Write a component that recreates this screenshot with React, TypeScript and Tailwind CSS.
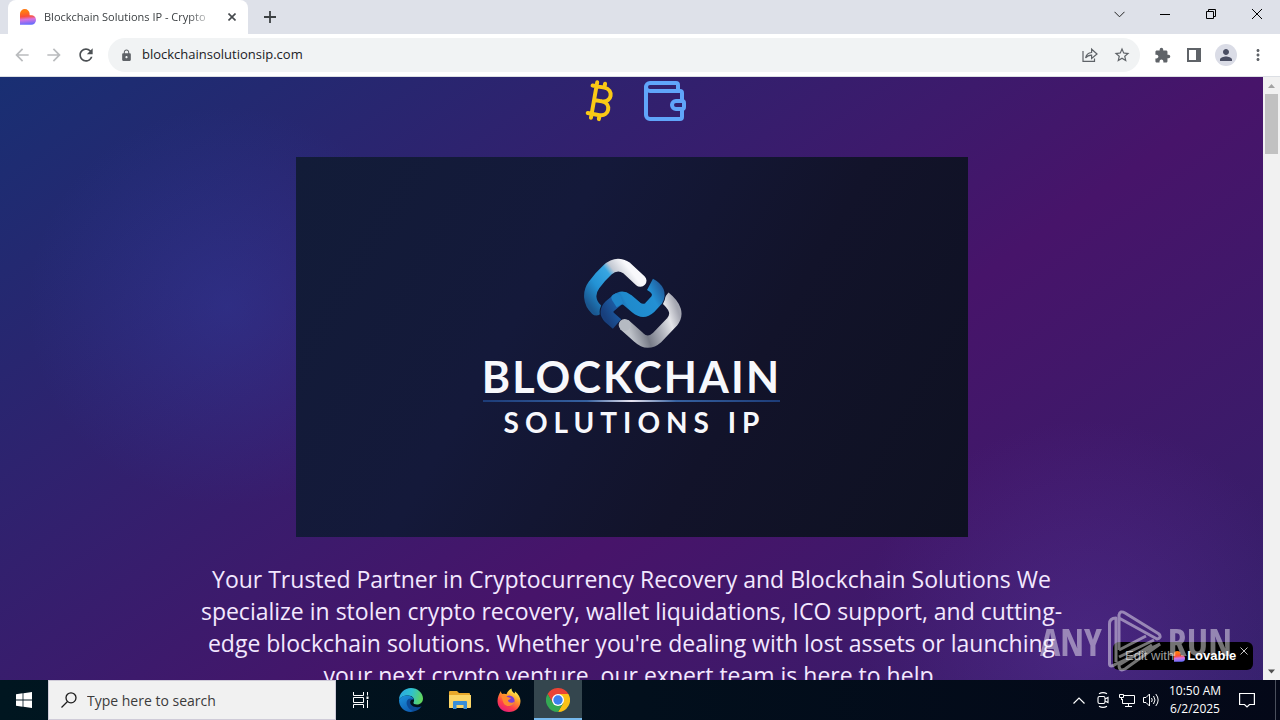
import React from "react";
import { Bitcoin, Wallet } from "lucide-react";
import {
  MdArrowBack,
  MdArrowForward,
  MdExtension,
  MdLock,
  MdMoreVert,
  MdPerson,
  MdRefresh,
  MdStarBorder,
} from "react-icons/md";

interface IconButtonProps {
  label: string;
  className?: string;
  children: React.ReactNode;
}

const IconButton = ({ label, className = "w-8", children }: IconButtonProps) => (
  <button
    type="button"
    aria-label={label}
    className={`flex h-full shrink-0 items-center justify-center ${className}`}
  >
    {children}
  </button>
);

const LovableHeart = ({ id, size }: { id: string; size: number }) => (
  <svg width={size} height={size} viewBox="0 0 16 16" aria-hidden="true">
    <defs>
      <linearGradient id={id} x1="0.45" y1="0" x2="0.55" y2="1">
        <stop offset="0.15" stopColor="#ff7a14" />
        <stop offset="0.45" stopColor="#fb4f38" />
        <stop offset="0.65" stopColor="#d873e0" />
        <stop offset="1" stopColor="#5b6cff" />
      </linearGradient>
    </defs>
    <path
      d="M0 4.8A4.8 4.8 0 0 1 9.6 4.8V6.2H11.2A4.8 4.8 0 0 1 11.2 15.8H0Z"
      fill={`url(#${id})`}
    />
  </svg>
);

const TabStrip = () => (
  <div className="flex h-[34px] shrink-0 bg-[#dee1e9] pl-2">
    <div className="flex h-full w-60 items-center rounded-t-lg bg-white pl-3 pr-1.5">
      <LovableHeart id="tab-heart" size={16} />
      <span className="ml-2 w-[170px] overflow-hidden whitespace-nowrap text-[11px] text-[#3c4043] [mask-image:linear-gradient(to_right,black_85%,transparent)]">
        Blockchain Solutions IP - Crypto
      </span>
      <IconButton label="Close tab" className="ml-auto w-5">
        <svg width="8" height="8" viewBox="0 0 8 8" stroke="#45494d" strokeWidth="1.6">
          <path d="M0.5 0.5L7.5 7.5M7.5 0.5L0.5 7.5" />
        </svg>
      </IconButton>
    </div>
    <IconButton label="New tab" className="ml-1.5 w-8">
      <svg width="12" height="12" viewBox="0 0 12 12" stroke="#3c4043" strokeWidth="1.8">
        <path d="M6 0V12M0 6H12" />
      </svg>
    </IconButton>
    <div className="ml-auto flex pb-1.5">
      <IconButton label="Search tabs" className="w-[46px]">
        <svg width="11" height="7" viewBox="0 0 11 7" fill="none" stroke="#222">
          <path d="M0.5 0.8L5.5 5.8L10.5 0.8" />
        </svg>
      </IconButton>
      <IconButton label="Minimize" className="w-[46px]">
        <svg width="10" height="10" viewBox="0 0 10 10" stroke="#000">
          <path d="M0 5.5H10" />
        </svg>
      </IconButton>
      <IconButton label="Restore" className="w-[46px]">
        <svg width="10" height="10" viewBox="0 0 10 10" fill="none" stroke="#000">
          <path d="M0.5 2.5H7.5V9.5H0.5ZM2.5 2.5V0.5H9.5V7.5H7.5" />
        </svg>
      </IconButton>
      <IconButton label="Close" className="w-[46px]">
        <svg width="10" height="10" viewBox="0 0 10 10" stroke="#000">
          <path d="M0 0L10 10M10 0L0 10" />
        </svg>
      </IconButton>
    </div>
  </div>
);

const Toolbar = () => (
  <div className="flex h-[43px] shrink-0 items-center border-b border-[#dcdfe4] bg-white px-1.5 text-[#5f6368]">
    <IconButton label="Back">
      <MdArrowBack size={20} color="#babcbe" />
    </IconButton>
    <IconButton label="Forward">
      <MdArrowForward size={20} color="#babcbe" />
    </IconButton>
    <IconButton label="Reload">
      <MdRefresh size={20} color="#4c5054" />
    </IconButton>
    <div className="ml-1.5 flex h-[34px] flex-1 items-center rounded-full bg-[#f1f3f4] pl-3 pr-0.5">
      <MdLock size={13} className="shrink-0" />
      <input
        type="text"
        aria-label="Address"
        defaultValue="blockchainsolutionsip.com"
        className="ml-[9px] min-w-0 flex-1 bg-transparent text-[13px] text-[#202124] outline-none"
      />
      <IconButton label="Share">
        <svg width="16" height="16" viewBox="0 0 16 16" fill="none" stroke="#5f6368" strokeWidth="1.2">
          <path d="M1 4V14.4H12.5V11.5" />
          <path d="M3.6 11C4.2 7.6 6.3 5.8 9.6 5.5V2.2L15 7L9.6 11.4V8.2C7 8.2 5.1 9 3.6 11Z" />
        </svg>
      </IconButton>
      <IconButton label="Bookmark this page">
        <MdStarBorder size={18} />
      </IconButton>
    </div>
    <div className="ml-1.5 flex h-full">
      <IconButton label="Extensions">
        <MdExtension size={17} />
      </IconButton>
      <IconButton label="Side panel">
        <svg width="14" height="14" viewBox="0 0 14 14">
          <path d="M1 1H13V13H1Z" fill="none" stroke="#5f6368" strokeWidth="2" />
          <path d="M9 1H13V13H9Z" fill="#5f6368" />
        </svg>
      </IconButton>
      <IconButton label="Profile">
        <span className="flex size-[22px] items-center justify-center rounded-full bg-[#dadce6]">
          <MdPerson size={18} color="#4a4e63" />
        </span>
      </IconButton>
      <IconButton label="Menu">
        <MdMoreVert size={18} />
      </IconButton>
    </div>
  </div>
);

const twistPath =
  "M240 103Q276 122 260 150L240 172Q220 190 199 173L172 150Q156 138 142 150L120 168Q102 186 119 203L141 222";

const ChainEmblem = () => (
  <svg
    viewBox="36 24 300 276"
    className="h-[92px] w-[100px]"
    fill="none"
    aria-hidden="true"
  >
    <defs>
      <linearGradient id="upper" gradientUnits="userSpaceOnUse" x1="70" y1="185" x2="215" y2="75">
        <stop offset="0" stopColor="#1a568f" />
        <stop offset="0.3" stopColor="#2392d4" />
        <stop offset="0.58" stopColor="#38a6e2" />
        <stop offset="0.68" stopColor="#c3c8d2" />
        <stop offset="0.9" stopColor="#f8f8fb" />
      </linearGradient>
      <linearGradient id="twist" gradientUnits="userSpaceOnUse" x1="105" y1="200" x2="275" y2="110">
        <stop offset="0" stopColor="#183f7c" />
        <stop offset="0.25" stopColor="#1c5da6" />
        <stop offset="0.4" stopColor="#1f8acc" />
        <stop offset="0.8" stopColor="#2390d4" />
        <stop offset="1" stopColor="#215f9f" />
      </linearGradient>
      <linearGradient id="silver" gradientUnits="userSpaceOnUse" x1="170" y1="220" x2="320" y2="170">
        <stop offset="0" stopColor="#bfc3ca" />
        <stop offset="0.3" stopColor="#777b87" />
        <stop offset="0.55" stopColor="#a9acb6" />
        <stop offset="0.8" stopColor="#e4e5e9" />
        <stop offset="1" stopColor="#a4a6b1" />
      </linearGradient>
    </defs>
    <path
      d="M163 224L206 262Q233 288 262 262L306 216Q334 182 284 142"
      stroke="url(#silver)"
      strokeWidth="37"
    />
    <circle cx="164" cy="225" r="18" fill="#b5bac2" />
    <path
      d="M79 178C57 158 55 128 72 105Q88 82 112 60Q140 34 170 54L211 92"
      stroke="url(#upper)"
      strokeWidth="37"
      strokeLinecap="round"
    />
    <path d={twistPath} stroke="#0f1836" strokeWidth="44" />
    <path d={twistPath} stroke="url(#twist)" strokeWidth="38" />
    <path d="M126 150Q118 136 138 130L150 134L160 160L140 172Z" fill="#1f84c8" />
  </svg>
);

const LogoBanner = () => (
  <div
    role="img"
    aria-label="Blockchain Solutions IP"
    className="mt-8 flex h-[380px] w-full max-w-2xl shrink-0 flex-col items-center bg-[linear-gradient(120deg,#121c38_0%,#14193a_35%,#12132a_65%,#0e1121_100%)] pt-[101px] font-['Lato',sans-serif] text-[#f7f8fc]"
  >
    <ChainEmblem />
    <span className="mt-1 text-[43px] font-bold leading-[46px] tracking-wider">
      BLOCKCHAIN
    </span>
    <span className="h-0.5 w-[297px] bg-[linear-gradient(to_right,#1d3c78,#35609f_35%,#e8e4f0_50%,#35609f_65%,#1d3c78)]" />
    <span className="mt-0.5 pl-1.5 text-[28px] font-bold leading-9 tracking-[6px]">
      SOLUTIONS IP
    </span>
  </div>
);

const ScrollBar = () => (
  <div className="flex w-[17px] shrink-0 flex-col items-center bg-[#f1f1f1]">
    <svg width="17" height="17" viewBox="0 0 17 17" fill="#a3a3a3">
      <path d="M5 11L8.5 7L12 11Z" />
    </svg>
    <div className="h-[60px] w-[13px] bg-[#c1c1c1]" />
    <svg width="17" height="17" viewBox="0 0 17 17" fill="#505050" className="mt-auto">
      <path d="M5 6.5L8.5 10.5L12 6.5Z" />
    </svg>
  </div>
);

const Watermark = () => (
  <div className="pointer-events-none absolute bottom-2 right-12 flex items-center gap-1.5 font-['Open_Sans_Condensed','Liberation_Sans_Narrow',sans-serif] text-[38px] leading-[60px] text-white opacity-45">
    <span>ANY</span>
    <svg width="54" height="62" viewBox="0 0 54 62" fill="none" stroke="#fff" strokeWidth="3" strokeLinejoin="round">
      <path d="M8 52V8Q1.5 8 1.5 14V54Q2 58 8 54L52 34" />
      <path d="M11 40V5Q12 0 17 3L51 24Q54 28 49 29L11 8" />
      <path d="M11 40L38 26M11 47L46 30M52 34L17 59Q11 62 11 55L44 35" />
    </svg>
    <span>RUN</span>
  </div>
);

const LovableBadge = () => (
  <div className="absolute bottom-2.5 right-[27px] flex h-7 w-[140px] items-center rounded-md bg-black pl-3 font-['Liberation_Sans',sans-serif] text-[13px]">
    <a href="#lovable" className="flex items-center text-[#9c9c9c]">
      Edit with
      <LovableHeart id="badge-heart" size={11} />
      <span className="ml-0.5 font-bold text-white">Lovable</span>
    </a>
    <button type="button" aria-label="Dismiss" className="absolute right-[5px] top-[5px]">
      <svg width="8" height="8" viewBox="0 0 8 8" stroke="#c4c4c4">
        <path d="M0.5 0.5L7.5 7.5M7.5 0.5L0.5 7.5" />
      </svg>
    </button>
  </div>
);

const Page = () => (
  <div className="relative flex min-h-0 flex-1 overflow-hidden">
    <main className="flex flex-1 flex-col items-center overflow-hidden bg-[radial-gradient(circle_at_18%_38%,rgba(52,76,190,0.26),transparent_200px),radial-gradient(circle_at_86%_95%,rgba(110,60,180,0.3),transparent_230px),linear-gradient(to_bottom_right,#192f73,#47146a_50%,#2a2569)] bg-[length:100%_100%,100%_100%,100%_148%] bg-no-repeat">
      <div className="flex shrink-0 gap-4">
        <Bitcoin size={48} className="text-[#fac915]" />
        <Wallet size={48} className="text-[#60a5fa]" />
      </div>
      <LogoBanner />
      <p className="mt-[26px] w-full max-w-4xl shrink-0 text-center text-[23px] leading-8 text-[#f3e8ff]">
        Your Trusted Partner in Cryptocurrency Recovery and Blockchain Solutions We
        specialize in stolen crypto recovery, wallet liquidations, ICO support, and
        cutting-edge blockchain solutions. Whether you're dealing with lost assets or
        launching your next crypto venture, our expert team is here to help.
      </p>
    </main>
    <ScrollBar />
    <LovableBadge />
    <Watermark />
  </div>
);

const EdgeIcon = () => (
  <svg width="24" height="24" viewBox="0 0 24 24" aria-hidden="true">
    <defs>
      <linearGradient id="edge-top" x1="0" y1="0.3" x2="1" y2="0.5">
        <stop offset="0" stopColor="#2ba7e0" />
        <stop offset="0.5" stopColor="#2fc1cf" />
        <stop offset="1" stopColor="#62d65a" />
      </linearGradient>
      <linearGradient id="edge-left" x1="0" y1="0" x2="0.6" y2="1">
        <stop offset="0" stopColor="#1c93dc" />
        <stop offset="1" stopColor="#0f5fb4" />
      </linearGradient>
    </defs>
    <path d="M0 12C0 5 5.5 0 12 0S24 5 24 10.5C24 14 21.5 16.5 18 16.5C15.5 16.5 14 15.5 14.5 14.5C16.5 11 13.5 7.5 9 7.5C4.5 7.5 1 9.5 0 12Z" fill="url(#edge-top)" />
    <path d="M0 12C1 9.5 4.5 7 9 7.5C12 8 14.5 9.5 14.8 11.5C10 10.5 8.5 14 10 17.5C11.5 21 15 23 17 22.8C8 26.5 0 20.5 0 12Z" fill="url(#edge-left)" />
    <path d="M14.8 11.3C9.5 8.5 6.5 13 8 17C9.5 21 13.5 24 17 22.8C19.5 22 21.5 20 22.6 18.2C18 20.5 11 18.5 11.2 14C11.3 12.5 13 11 14.8 11.3Z" fill="#0c4a96" />
  </svg>
);

const ExplorerIcon = () => (
  <svg width="22" height="20" viewBox="0 0 22 20" aria-hidden="true">
    <path d="M0 2Q0 1 1 1H8L10 3H20Q21 3 21 4V18H0Z" fill="#e9a92b" />
    <path d="M0 5H22V17Q22 18 21 18H1Q0 18 0 17Z" fill="#fcd667" />
    <path d="M4 19V12Q4 11 5 11H17Q18 11 18 12V19H14.5V15H7.5V19Z" fill="#3a8fd8" />
  </svg>
);

const FirefoxIcon = () => (
  <svg width="24" height="24" viewBox="0 0 24 24" aria-hidden="true">
    <defs>
      <linearGradient id="fox" x1="0.8" y1="0" x2="0.25" y2="1">
        <stop offset="0.1" stopColor="#fff04f" />
        <stop offset="0.4" stopColor="#ff9a2a" />
        <stop offset="0.7" stopColor="#ff4049" />
        <stop offset="1" stopColor="#e5197c" />
      </linearGradient>
    </defs>
    <path d="M4 3C4 5 4.5 5.5 5.5 6C7 5.5 8.5 5.6 9.5 6.2C10.5 3.5 12 2 14.5 0.5C14.5 3 16 4 17.5 5.5C18 4.8 18 4 17.8 3.2C21.5 6 23.5 9.5 23.5 13C23.5 19.5 18.5 24 12 24C5.5 24 0.5 19.5 0.5 13C0.5 9 2 6 4 3Z" fill="url(#fox)" />
    <circle cx="12.2" cy="12.8" r="5.4" fill="#7a3fd6" />
    <path d="M4 8.5C6 7 9 7.5 10.5 9L14 10C13 11.5 11.5 11.5 11 12.5C11.5 15 15.5 15.5 17.5 13.5C17 18.5 9 20 6.5 15C5.5 12.5 5.5 10 4 8.5Z" fill="#ff8a2d" />
  </svg>
);

const ChromeIcon = () => (
  <svg width="24" height="24" viewBox="0 0 24 24" aria-hidden="true">
    <path d="M1.6 6A12 12 0 0 1 22.4 6H12L6.8 15Z" fill="#ea4335" />
    <path d="M22.4 6A12 12 0 0 1 12 24L17.2 15L12 6Z" fill="#fbc116" />
    <path d="M12 24A12 12 0 0 1 1.6 6L6.8 15H17.2Z" fill="#34a853" />
    <circle cx="12" cy="12" r="6" fill="#fff" />
    <circle cx="12" cy="12" r="4.7" fill="#3b80ee" />
  </svg>
);

const Taskbar = () => (
  <div className="flex h-10 shrink-0 bg-[linear-gradient(to_right,#001620,#020f1c_50%,#040818)] text-white">
    <IconButton label="Start" className="w-12">
      <svg width="16" height="16" viewBox="0 0 16 16" fill="#fff">
        <path d="M0 2.3L6.6 1.3V7.6H0ZM7.4 1.2L16 0V7.6H7.4ZM0 8.4H6.6V14.7L0 13.7ZM7.4 8.4H16V16L7.4 14.8Z" />
      </svg>
    </IconButton>
    <label className="flex w-72 items-center border border-[#cfcbd8] bg-[#f1f1f1] pl-3">
      <svg width="16" height="16" viewBox="0 0 16 16" fill="none" stroke="#1c1c1c" strokeWidth="1.3">
        <circle cx="10" cy="5.8" r="5" />
        <path d="M6.5 9.5L0.5 15.5" />
      </svg>
      <input
        type="text"
        aria-label="Search"
        placeholder="Type here to search"
        className="ml-2.5 min-w-0 flex-1 bg-transparent text-[14px] outline-none placeholder:text-[#3b3b3b]"
      />
    </label>
    <div className="flex gap-px">
      <IconButton label="Task View" className="w-[50px]">
        <svg width="18" height="16" viewBox="0 0 18 16" fill="none" stroke="#fff">
          <path d="M1.5 0V3.5H11.5V0M1.5 16V12.5H11.5V16M1.5 5.5H11.5V10.5H1.5ZM15.5 0V3.5M15.5 8V16" />
          <path d="M14.5 4.5H16.5V7H14.5Z" fill="#fff" stroke="none" />
        </svg>
      </IconButton>
      <IconButton label="Microsoft Edge" className="w-12">
        <EdgeIcon />
      </IconButton>
      <IconButton label="File Explorer" className="w-12">
        <ExplorerIcon />
      </IconButton>
      <IconButton label="Firefox" className="w-12">
        <FirefoxIcon />
      </IconButton>
      <IconButton
        label="Google Chrome"
        className="w-12 border-b-2 border-[#76b9ed] bg-[#34464e] pt-0.5"
      >
        <ChromeIcon />
      </IconButton>
    </div>
    <div className="ml-auto flex">
      <IconButton label="Show hidden icons" className="w-6">
        <svg width="12" height="7" viewBox="0 0 12 7" fill="none" stroke="#fff" strokeWidth="1.2">
          <path d="M0.5 6.5L6 1L11.5 6.5" />
        </svg>
      </IconButton>
      <IconButton label="Meet Now" className="w-6">
        <svg width="14" height="16" viewBox="0 0 14 16" fill="none" stroke="#fff" strokeWidth="1.1">
          <rect x="2" y="4.5" width="7" height="7" rx="1.5" />
          <path d="M9 7L12 5.5V10.5L9 9M3 1.8Q7 -0.5 11 1.8M3 14.2Q7 16.5 11 14.2" />
        </svg>
      </IconButton>
      <IconButton label="Network" className="w-6">
        <svg width="16" height="14" viewBox="0 0 16 14" fill="none" stroke="#fff">
          <path d="M5 2.5H15.5V10.5H3.5V6M9.5 10.5V13.5M6 13.5H13M0.5 1.5H4.5V4.5H0.5ZM2.5 4.5V7" />
        </svg>
      </IconButton>
      <IconButton label="Volume" className="w-6">
        <svg width="17" height="14" viewBox="0 0 17 14" fill="none" stroke="#fff">
          <path d="M0.5 4.5H3L6.5 1V13L3 9.5H0.5Z" />
          <path d="M8.5 5Q10 7 8.5 9M10.5 3Q13.5 7 10.5 11M12.8 1Q17.5 7 12.8 13" />
        </svg>
      </IconButton>
      <button
        type="button"
        className="flex w-16 flex-col items-center justify-center whitespace-nowrap text-[12px] leading-[18px]"
      >
        <span>10:50 AM</span>
        <span>6/2/2025</span>
      </button>
      <IconButton label="Notifications" className="w-10">
        <svg width="16" height="16" viewBox="0 0 16 16" fill="none" stroke="#fff" strokeWidth="1.2">
          <path d="M0.6 1.5H15.4V12.5H10.5L8 15L5.5 12.5H0.6Z" />
        </svg>
      </IconButton>
      <div className="ml-2 w-[5px] border-l border-[#4a4f5c]" />
    </div>
  </div>
);

export default function App() {
  return (
    <div className="flex h-screen flex-col overflow-hidden font-['Open_Sans','Noto_Sans',sans-serif]">
      <TabStrip />
      <Toolbar />
      <Page />
      <Taskbar />
    </div>
  );
}
